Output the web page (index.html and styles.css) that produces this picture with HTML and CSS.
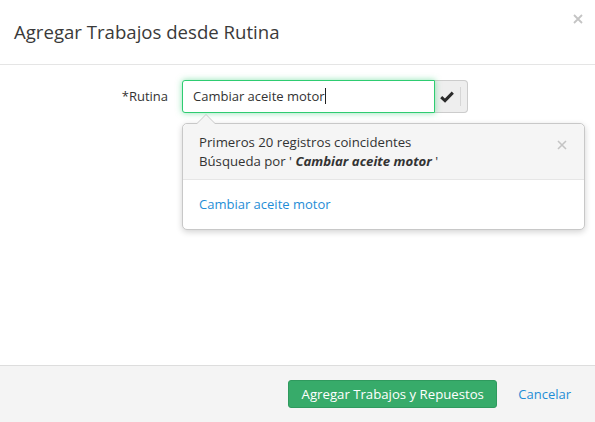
FILE: index.html
```html
<!DOCTYPE html>
<html lang="es">
<head>
<meta charset="utf-8">
<title>Agregar Trabajos desde Rutina</title>
<link rel="stylesheet" href="styles.css">
</head>
<body>
<div class="modal">
  <header class="modal-header">
    <h1 class="modal-title">Agregar Trabajos desde Rutina</h1>
    <button class="close" type="button" aria-label="Cerrar">
      <svg width="10" height="10" viewBox="0 0 10 10"><path d="M1 1L9 9M9 1L1 9" stroke="#c4c4c4" stroke-width="1.8"/></svg>
    </button>
  </header>
  <main class="modal-body">
    <div class="form-row">
      <label class="form-label">*Rutina</label>
      <div class="input-group">
        <div class="input">Cambiar aceite motor<span class="caret"></span></div>
        <span class="addon">
          <svg width="14" height="12" viewBox="0 0 14 12"><path d="M1.2 6.2L5 9.6L12.8 1.6" fill="none" stroke="#2b2b2b" stroke-width="3"/></svg>
          <span class="addon-sep"></span>
        </span>
        <div class="popover">
          <span class="arrow"></span>
          <div class="popover-head">
            <div>Primeros 20 registros coincidentes</div>
            <div>Búsqueda por ' <b><i>Cambiar aceite motor</i></b> '</div>
            <button class="popover-close" type="button" aria-label="Cerrar">
              <svg width="10" height="10" viewBox="0 0 10 10"><path d="M1 1L9 9M9 1L1 9" stroke="#c4c4c4" stroke-width="1.6"/></svg>
            </button>
          </div>
          <div class="popover-body">
            <a class="link" href="#">Cambiar aceite motor</a>
          </div>
        </div>
      </div>
    </div>
  </main>
  <footer class="modal-footer">
    <button class="btn-primary" type="button">Agregar Trabajos y Repuestos</button>
    <a class="link cancel" href="#">Cancelar</a>
  </footer>
</div>
</body>
</html>
```
FILE: styles.css
```css
* { box-sizing: border-box; }
html, body { margin: 0; padding: 0; background: #fff; }
body {
  font-family: "Open Sans", "Noto Sans", sans-serif;
  color: #333;
  font-size: 13px;
}
.modal {
  width: 595px;
  height: 422px;
  display: flex;
  flex-direction: column;
  background: #fff;
}
.modal-header {
  height: 65px;
  border-bottom: 1px solid #e5e5e5;
  display: flex;
  align-items: flex-start;
  justify-content: space-between;
  padding: 0 12px 0 14px;
}
.modal-title {
  margin: 20px 0 0;
  font-size: 18.6px;
  font-weight: 400;
  line-height: 24px;
  color: #3a3a3a;
}
.close {
  border: 0;
  background: none;
  padding: 0;
  margin-top: 14px;
  width: 10px;
  height: 10px;
  display: flex;
}
.modal-body {
  flex: 1;
  padding-top: 15px;
}
.form-row {
  display: grid;
  grid-template-columns: 168px 286px;
  column-gap: 14px;
  align-items: start;
}
.form-label {
  text-align: right;
  line-height: 33px;
  font-size: 13px;
  color: #333;
}
.input-group {
  position: relative;
  display: flex;
  height: 33px;
}
.input {
  width: 253px;
  height: 33px;
  border: 1px solid #2ecc71;
  border-radius: 3px 0 0 3px;
  box-shadow: 0 0 6px rgba(46, 204, 113, 0.55);
  padding: 0 10px;
  line-height: 31px;
  font-size: 13px;
  color: #333;
  position: relative;
  z-index: 1;
  background: #fff;
}
.caret {
  display: inline-block;
  width: 1px;
  height: 16px;
  background: #222;
  vertical-align: -3px;
}
.addon {
  width: 33px;
  height: 33px;
  border: 1px solid #ccc;
  border-left: 0;
  border-radius: 0 4px 4px 0;
  background: #eee;
  display: flex;
  align-items: center;
  padding-left: 5px;
  gap: 6px;
}
.addon-sep {
  width: 1px;
  height: 19px;
  background: #d6d6d6;
}
.popover {
  position: absolute;
  top: 43px;
  left: 0;
  width: 403px;
  border: 1px solid #c8c8c8;
  border-radius: 5px;
  background: #fff;
  box-shadow: 0 2px 6px rgba(0, 0, 0, 0.18);
  z-index: 2;
}
.arrow {
  position: absolute;
  top: -10px;
  left: 13px;
  width: 0;
  height: 0;
  border-left: 10px solid transparent;
  border-right: 10px solid transparent;
  border-bottom: 10px solid #c8c8c8;
}
.arrow::after {
  content: "";
  position: absolute;
  left: -9px;
  top: 1px;
  border-left: 9px solid transparent;
  border-right: 9px solid transparent;
  border-bottom: 9px solid #f5f5f5;
}
.popover-head {
  position: relative;
  background: #f5f5f5;
  border-bottom: 1px solid #e6e6e6;
  border-radius: 5px 5px 0 0;
  padding: 9px 16px 8px;
  line-height: 19px;
  font-size: 13.2px;
  color: #333;
}
.popover-close {
  position: absolute;
  top: 16px;
  right: 17px;
  border: 0;
  background: none;
  padding: 0;
  width: 10px;
  height: 10px;
  display: flex;
}
.popover-body {
  padding: 15px 16px 15px;
  line-height: 19px;
}
.link {
  color: #1f8dd6;
  text-decoration: none;
  font-size: 13px;
}
.modal-footer {
  height: 57px;
  border-top: 1px solid #ddd;
  background: #f4f4f4;
  display: flex;
  align-items: center;
  justify-content: flex-end;
  padding: 0 24px 0 0;
  gap: 21px;
}
.btn-primary {
  font-family: inherit;
  width: 209px;
  height: 28px;
  border: 1px solid #2f9a5e;
  border-radius: 3px;
  background: #37ab6a;
  color: #fff;
  font-size: 13.2px;
  padding: 0;
}
.cancel {
  font-size: 13px;
}
```
